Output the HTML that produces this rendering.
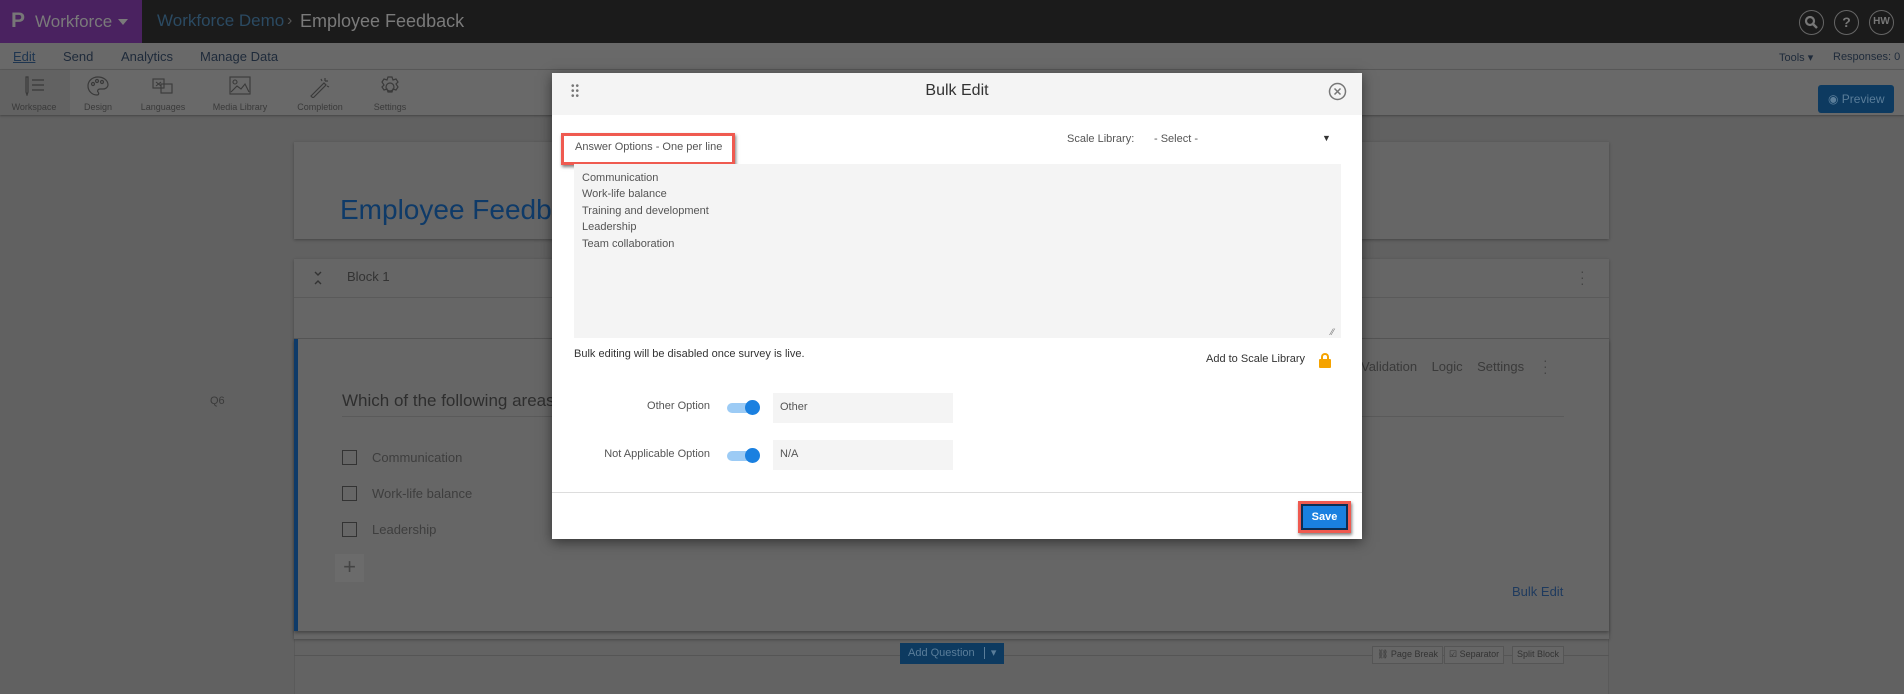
<!DOCTYPE html>
<html><head><meta charset="utf-8"><style>
*{box-sizing:border-box;margin:0;padding:0}
body{width:1904px;height:691px;overflow:hidden;background:#616161;font-family:"Liberation Sans",sans-serif;position:relative}
.a{position:absolute;white-space:nowrap}
.card{position:absolute;background:#666;box-shadow:0 1px 3px rgba(0,0,0,.3)}
.tb{position:absolute;top:102px;font-size:9px;color:#3a3a3a;transform:translateX(-50%)}
.ic{position:absolute;top:76px;transform:translateX(-50%)}
.chk{position:absolute;width:15px;height:15px;border:1.5px solid #333}
.opt{font-size:13px;color:#3e3e3e}
.sb{position:absolute;top:646px;height:18px;border:1px solid #555;font-size:9px;color:#333;padding:2px 4px;background:#666}
</style></head><body>
<div class="a" style="left:0;top:0;width:1904px;height:43px;background:#1b1b1b"></div>
<div class="a" style="left:0;top:0;width:142px;height:43px;background:#4a2260"></div>
<div class="a" style="left:11px;top:9px;font-size:21px;color:#777;font-weight:bold">P</div>
<div class="a" style="left:35px;top:12px;font-size:17px;color:#7a7a7a">Workforce</div>
<div class="a" style="left:118px;top:19px;width:0;height:0;border-left:5px solid transparent;border-right:5px solid transparent;border-top:6px solid #7a7a7a"></div>
<div class="a" style="left:157px;top:11px;font-size:17px;color:#2b4a62">Workforce Demo</div>
<div class="a" style="left:287px;top:12px;font-size:16px;color:#555">›</div>
<div class="a" style="left:300px;top:11px;font-size:18px;color:#7a7a7a">Employee Feedback</div>
<div class="a" style="left:1799px;top:10px;width:25px;height:25px;border:1.5px solid #666;border-radius:50%"><svg width="22" height="22" viewBox="0 0 22 22"><circle cx="10" cy="10" r="4" fill="none" stroke="#777" stroke-width="2.2"/><path d="M13 13l4 4" stroke="#777" stroke-width="2.5"/></svg></div>
<div class="a" style="left:1834px;top:10px;width:25px;height:25px;border:1.5px solid #666;border-radius:50%;color:#777;font-size:14px;text-align:center;line-height:22px;font-weight:bold">?</div>
<div class="a" style="left:1869px;top:10px;width:25px;height:25px;border:1.5px solid #666;border-radius:50%;color:#777;font-size:10px;text-align:center;line-height:22px;font-weight:bold">HW</div>
<div class="a" style="left:0;top:43px;width:1904px;height:27px;background:#696969;border-bottom:1px solid #5a5a5a"></div>
<div class="a" style="left:13px;top:49px;font-size:13px;color:#1e3550;text-decoration:underline">Edit</div>
<div class="a" style="left:63px;top:49px;font-size:13px;color:#1e2a3a">Send</div>
<div class="a" style="left:121px;top:49px;font-size:13px;color:#1e2a3a">Analytics</div>
<div class="a" style="left:200px;top:49px;font-size:13px;color:#1e2a3a">Manage Data</div>
<div class="a" style="left:1779px;top:51px;font-size:11px;color:#1e2a3a">Tools ▾</div>
<div class="a" style="left:1833px;top:51px;font-size:11px;color:#1e2a3a">Responses: 0</div>
<div class="a" style="left:0;top:70px;width:1904px;height:45px;background:#696969;box-shadow:0 1px 2px rgba(0,0,0,.3)"></div>
<div class="a" style="left:0;top:70px;width:70px;height:45px;background:#626262"></div>
<svg class="ic" style="left:34px" width="22" height="20" viewBox="0 0 22 20" fill="none" stroke="#3a3a3a" stroke-width="1.2"><path d="M3 1v15l1 3 1-3V1zM9 4h12M9 9h12M9 14h12"/></svg>
<svg class="ic" style="left:98px" width="22" height="20" viewBox="0 0 22 20" fill="none" stroke="#3a3a3a" stroke-width="1.2"><path d="M11 1C5 1 1 5 1 10s4 9 9 9c2 0 2-2 1-3s0-3 2-3h3c3 0 5-2 5-4 0-5-5-8-10-8z"/><circle cx="6" cy="8" r="1.5"/><circle cx="10" cy="5" r="1.5"/><circle cx="15" cy="6" r="1.5"/></svg>
<svg class="ic" style="left:163px" width="22" height="20" viewBox="0 0 22 20" fill="none" stroke="#3a3a3a" stroke-width="1.1"><rect x="1" y="3" width="11" height="9"/><rect x="9" y="8" width="11" height="9"/><path d="M4 6l5 4M9 6l-5 4"/></svg>
<svg class="ic" style="left:240px" width="22" height="20" viewBox="0 0 22 20" fill="none" stroke="#3a3a3a" stroke-width="1.1"><rect x="1" y="1" width="20" height="17"/><circle cx="6" cy="6" r="2"/><path d="M2 16l6-6 4 3 4-5 4 8"/></svg>
<svg class="ic" style="left:320px" width="22" height="22" viewBox="0 0 22 22" fill="none" stroke="#3a3a3a" stroke-width="1.2"><path d="M2 20L15 7l2 2L4 22zM16 2v3M19 5h-3M18 10l2 1M12 3l1 2"/></svg>
<svg class="ic" style="left:390px" width="22" height="22" viewBox="0 0 22 22" fill="none" stroke="#3a3a3a" stroke-width="1.2"><circle cx="11" cy="11" r="4"/><path d="M9 1h4l1 3 3-1 2 3-2 2 2 3-2 3-3-1-1 3H9l-1-3-3 1-2-3 2-2-2-3 2-3 3 1z"/></svg>
<div class="tb" style="left:34px">Workspace</div>
<div class="tb" style="left:98px">Design</div>
<div class="tb" style="left:163px">Languages</div>
<div class="tb" style="left:240px">Media Library</div>
<div class="tb" style="left:320px">Completion</div>
<div class="tb" style="left:390px">Settings</div>
<div class="a" style="left:1818px;top:85px;width:76px;height:28px;background:#0d3a60;border-radius:3px;color:#5a7d99;font-size:12px;line-height:28px;padding-left:10px">&#9673; Preview</div>
<div class="card" style="left:294px;top:142px;width:1315px;height:97px"></div>
<div class="a" style="left:340px;top:194px;font-size:28px;color:#0e3a68">Employee Feedback</div>
<div class="card" style="left:294px;top:634px;width:1315px;height:60px;background:#636363;box-shadow:none;border-left:1px solid #5a5a5a;border-right:1px solid #5a5a5a"></div>
<div class="card" style="left:294px;top:259px;width:1315px;height:380px"></div>
<div class="a" style="left:294px;top:297px;width:1315px;height:1px;background:#5a5a5a"></div>
<div class="a" style="left:294px;top:338px;width:1315px;height:1px;background:#555"></div>
<svg class="a" style="left:313px;top:271px" width="10" height="14" viewBox="0 0 10 14" fill="none" stroke="#333" stroke-width="1.4"><path d="M2 1l3 3 3-3M2 13l3-3 3 3"/></svg>
<div class="a" style="left:347px;top:269px;font-size:13px;color:#333">Block 1</div>
<div class="a" style="left:1580px;top:268px;font-size:14px;color:#444;line-height:6px">·<br>·<br>·</div>
<div class="a" style="left:294px;top:339px;width:1315px;height:292px;background:#666;border-left:4px solid #0e3a68;box-shadow:0 2px 3px rgba(0,0,0,.3)"></div>
<div class="a" style="left:210px;top:395px;font-size:11px;color:#3a3a3a">Q6</div>
<div class="a" style="left:342px;top:391px;font-size:17px;color:#2e2e2e">Which of the following areas</div>
<div class="a" style="left:342px;top:416px;width:1222px;height:1px;background:#5a5a5a"></div>
<div class="a" style="left:1361px;top:359px;font-size:13px;color:#3a3a3a">Validation &nbsp;&nbsp;&nbsp;Logic &nbsp;&nbsp;&nbsp;Settings</div>
<div class="a" style="left:1543px;top:357px;font-size:14px;color:#444;line-height:6px">·<br>·<br>·</div>
<div class="chk" style="left:342px;top:450px"></div><div class="a opt" style="left:372px;top:450px">Communication</div>
<div class="chk" style="left:342px;top:486px"></div><div class="a opt" style="left:372px;top:486px">Work-life balance</div>
<div class="chk" style="left:342px;top:522px"></div><div class="a opt" style="left:372px;top:522px">Leadership</div>
<div class="a" style="left:335px;top:554px;width:29px;height:28px;background:#6b6b6b;color:#444;font-size:22px;text-align:center;line-height:26px">+</div>
<div class="a" style="left:1512px;top:584px;font-size:13px;color:#1e3a5e">Bulk Edit</div>
<div class="a" style="left:294px;top:655px;width:1315px;height:1px;background:#555"></div>
<div class="a" style="left:900px;top:643px;width:104px;height:21px;background:#0d3a60;color:#5a7d99;font-size:11px;line-height:21px;padding-left:8px">Add Question &nbsp;&nbsp;<span style="border-left:1px solid #5a7d99;padding-left:6px">▾</span></div>
<div class="sb" style="left:1372px">⛓ Page Break</div>
<div class="sb" style="left:1444px">☑ Separator</div>
<div class="sb" style="left:1512px">Split Block</div>
<div class="a" style="left:552px;top:73px;width:810px;height:466px;background:#fff;box-shadow:0 3px 12px rgba(0,0,0,.5)"></div>
<div class="a" style="left:552px;top:73px;width:810px;height:42px;background:#f4f4f4"></div>
<div class="a" style="left:571px;top:84px;font-size:10px;color:#777;line-height:5px;letter-spacing:1px">••<br>••<br>••</div>
<div class="a" style="left:0;width:1904px;text-align:center;top:82px;font-size:16px;color:#333;padding-left:10px">Bulk Edit</div>
<svg class="a" style="left:1328px;top:82px" width="19" height="19" viewBox="0 0 19 19" fill="none" stroke="#777" stroke-width="1.5"><circle cx="9.5" cy="9.5" r="8"/><path d="M6.5 6.5l6 6M12.5 6.5l-6 6"/></svg>
<div class="a" style="left:561px;top:133px;width:174px;height:32px;border:3px solid #ef5a50;box-shadow:1px 2px 3px rgba(0,0,0,.5);background:#fff"></div>
<div class="a" style="left:575px;top:141px;font-size:11px;color:#555">Answer Options - One per line</div>
<div class="a" style="left:1067px;top:133px;font-size:11px;color:#555">Scale Library:</div>
<div class="a" style="left:1154px;top:133px;font-size:11px;color:#555">- Select -</div>
<div class="a" style="left:1322px;top:133px;font-size:9px;color:#333">▼</div>
<div class="a" style="left:574px;top:164px;width:767px;height:174px;background:#f4f4f4"></div>
<div class="a" style="left:582px;top:170px;font-size:11px;color:#555;line-height:16.4px">Communication<br>Work-life balance<br>Training and development<br>Leadership<br>Team collaboration</div>
<div class="a" style="left:1331px;top:327px;font-size:9px;color:#777">⁄⁄</div>
<div class="a" style="left:574px;top:348px;font-size:11px;color:#333">Bulk editing will be disabled once survey is live.</div>
<div class="a" style="left:1206px;top:353px;font-size:11px;color:#333">Add to Scale Library</div>
<div class="a" style="left:1319px;top:353px;width:12px;height:14px">
 <div style="position:absolute;left:2px;top:0;width:8px;height:8px;border:2px solid #f5a300;border-bottom:none;border-radius:4px 4px 0 0"></div>
 <div style="position:absolute;left:0;top:6px;width:12px;height:9px;background:#f5a300;border-radius:1px"></div></div>
<div class="a" style="left:610px;top:400px;width:100px;text-align:right;font-size:11px;color:#555">Other Option</div>
<div class="a" style="left:727px;top:403px;width:28px;height:10px;background:#9ccbf5;border-radius:5px"></div>
<div class="a" style="left:745px;top:400px;width:15px;height:15px;background:#1a80e0;border-radius:50%"></div>
<div class="a" style="left:773px;top:393px;width:180px;height:30px;background:#f4f4f4;font-size:11px;color:#555;padding:8px 7px">Other</div>
<div class="a" style="left:560px;top:448px;width:150px;text-align:right;font-size:11px;color:#555">Not Applicable Option</div>
<div class="a" style="left:727px;top:451px;width:28px;height:10px;background:#9ccbf5;border-radius:5px"></div>
<div class="a" style="left:745px;top:448px;width:15px;height:15px;background:#1a80e0;border-radius:50%"></div>
<div class="a" style="left:773px;top:440px;width:180px;height:30px;background:#f4f4f4;font-size:11px;color:#555;padding:8px 7px">N/A</div>
<div class="a" style="left:552px;top:492px;width:810px;height:1px;background:#ddd"></div>
<div class="a" style="left:1298px;top:501px;width:53px;height:32px;border:3px solid #ef5a50;box-shadow:1px 2px 3px rgba(0,0,0,.5);background:#0b2e55;padding:2px"><div style="background:#1a80e0;height:100%;color:#fff;font-size:11px;font-weight:bold;text-align:center;line-height:22px">Save</div></div>
</body></html>
